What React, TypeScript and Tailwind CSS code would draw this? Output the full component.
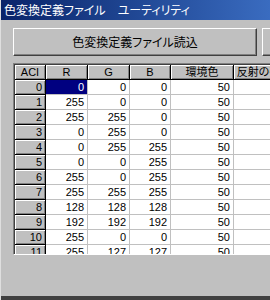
const rows = [
  [0, 0, 0, 50],
  [255, 0, 0, 50],
  [255, 255, 0, 50],
  [0, 255, 0, 50],
  [0, 255, 255, 50],
  [0, 0, 255, 50],
  [255, 0, 255, 50],
  [255, 255, 255, 50],
  [128, 128, 128, 50],
  [192, 192, 192, 50],
  [255, 0, 0, 50],
  [255, 127, 127, 50],
]

const headers = ["ACI", "R", "G", "B", "環境色", "反射の強さ"]

const fixedCell =
  "h-[15px] bg-[#c0c0c0] border-r border-b border-black shadow-[inset_1px_1px_#ffffff,inset_-1px_-1px_#808080] flex items-center overflow-hidden whitespace-nowrap"
const dataCell =
  "h-[15px] bg-white border-r border-b border-[#c0c0c0] flex items-center justify-end pr-[3px] overflow-hidden"

export default function App() {
  return (
    <div className="w-[270px] h-[300px] bg-[#c0c0c0] overflow-hidden flex flex-col border-l border-[#dfdfdf] font-['Liberation_Sans','Noto_Sans_CJK_JP',sans-serif] text-black">
      <div className="h-[20px] shrink-0 bg-gradient-to-r from-[#0a246a] to-[#3a6cc0] flex items-center pl-[3px] text-white text-[12px] font-['Noto_Sans_CJK_JP',sans-serif] [font-feature-settings:'palt'] whitespace-nowrap">
        色変換定義ファイル　ユーティリティ
      </div>

      <div className="mt-[8px] pl-[12px] flex gap-[5px] shrink-0">
        <button className="w-[244px] h-[28px] shrink-0 border-t border-l border-white border-r border-b border-r-[#404040] border-b-[#404040] shadow-[inset_-1px_-1px_#808080] text-[12px] font-['Noto_Sans_CJK_JP',sans-serif] [font-feature-settings:'palt'] flex items-center justify-center">
          色変換定義ファイル読込
        </button>
        <button className="w-[100px] h-[28px] shrink-0 border-t border-l border-white border-r border-b border-r-[#404040] border-b-[#404040] shadow-[inset_-1px_-1px_#808080]" />
      </div>

      <div className="mt-[7px] ml-[12px] h-[192px] shrink-0 border-t border-l border-[#808080] border-b border-b-white overflow-hidden">
        <div className="h-full border-t border-l border-[#404040] overflow-hidden">
          <div className="grid grid-cols-[31px_42px_42px_41px_63px_60px] w-max text-[11px] leading-none">
            {headers.map((h) => (
              <div key={h} className={`${fixedCell} justify-center [font-feature-settings:'palt']`}>
                {h}
              </div>
            ))}
            {rows.map((r, i) => (
              <div key={i} className="contents">
                <div className={`${fixedCell} justify-end pr-[3px]`}>{i}</div>
                {r.map((v, j) => (
                  <div
                    key={j}
                    className={
                      i === 0 && j === 0
                        ? "h-[15px] bg-[#000080] text-white border-r border-b border-[#c0c0c0] flex items-center justify-end pr-[3px]"
                        : dataCell
                    }
                  >
                    {v}
                  </div>
                ))}
                <div className={dataCell} />
              </div>
            ))}
          </div>
        </div>
      </div>

      <div className="flex-1" />
      <div className="h-[4px] shrink-0 bg-[#404040]" />
    </div>
  )
}
